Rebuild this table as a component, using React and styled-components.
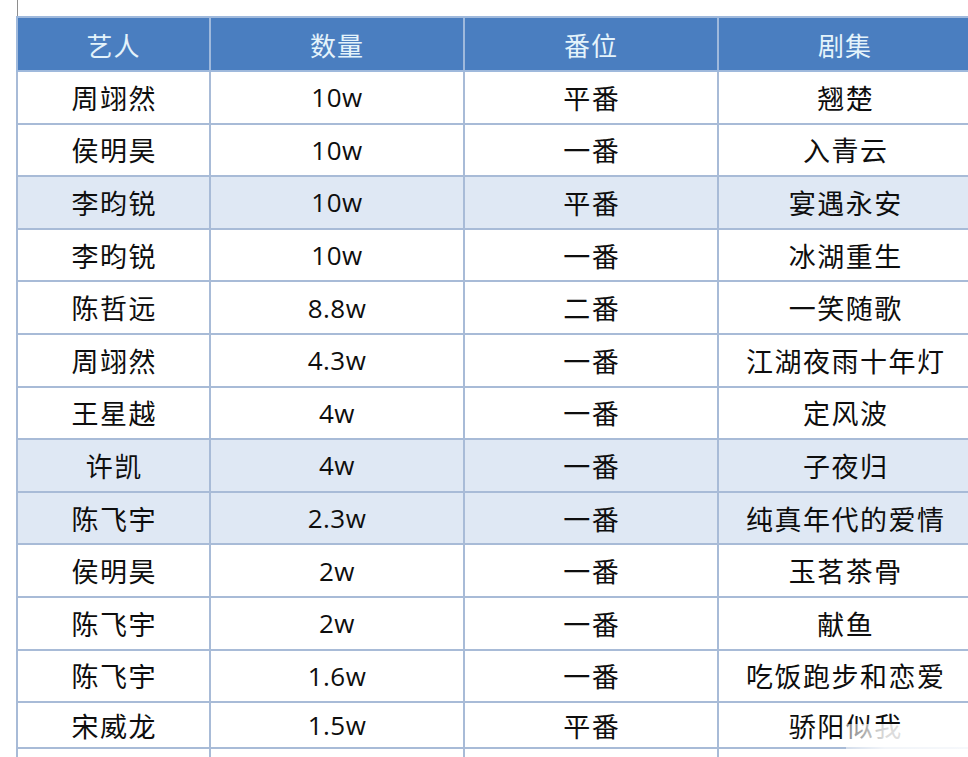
import styled, { createGlobalStyle } from 'styled-components';

const GlobalStyle = createGlobalStyle`
  html, body {
    margin: 0;
    padding: 0;
    background: #fff;
    overflow: hidden;
  }
  body {
    font-family: "Noto Sans CJK SC", "Noto Sans", sans-serif;
  }
`;

const rows = [
    ['周翊然', '10w', '平番', '翘楚'],
    ['侯明昊', '10w', '一番', '入青云'],
    ['李昀锐', '10w', '平番', '宴遇永安', true],
    ['李昀锐', '10w', '一番', '冰湖重生'],
    ['陈哲远', '8.8w', '二番', '一笑随歌'],
    ['周翊然', '4.3w', '一番', '江湖夜雨十年灯'],
    ['王星越', '4w', '一番', '定风波'],
    ['许凯', '4w', '一番', '子夜归', true],
    ['陈飞宇', '2.3w', '一番', '纯真年代的爱情', true],
    ['侯明昊', '2w', '一番', '玉茗茶骨'],
    ['陈飞宇', '2w', '一番', '献鱼'],
    ['陈飞宇', '1.6w', '一番', '吃饭跑步和恋爱'],
]

function App() {
    return (<Page>
        <GlobalStyle />
        <TopEdge />
        <TableWrap>
            <Sheet>
                <colgroup>
                    <col style={{ width: 193 }} />
                    <col style={{ width: 254 }} />
                    <col style={{ width: 254 }} />
                    <col style={{ width: 254 }} />
                </colgroup>
                <thead>
                    <HeadRow>
                        <Th>艺人</Th>
                        <Th>数量</Th>
                        <Th>番位</Th>
                        <Th>剧集</Th>
                    </HeadRow>
                </thead>
                <tbody>
                    {rows.map((r, i) => (
                        <Row key={i} $shaded={r[4]}>
                            <Td>{r[0]}</Td>
                            <Td $num>{r[1]}</Td>
                            <Td>{r[2]}</Td>
                            <Td>{r[3]}</Td>
                        </Row>
                    ))}
                    <Row $short>
                        <Td>宋威龙</Td>
                        <Td $num>1.5w</Td>
                        <Td>平番</Td>
                        <Td>骄阳似我</Td>
                    </Row>
                    <Row>
                        <Td></Td>
                        <Td></Td>
                        <Td></Td>
                        <Td></Td>
                    </Row>
                </tbody>
            </Sheet>
            <Watermark />
        </TableWrap>
    </Page>)
}

const Page = styled.div`
    width: 968px;
    height: 757px;
    overflow: hidden;
    padding-left: 16px;
    box-sizing: border-box;
`

const TopEdge = styled.div`
    height: 16px;
    border-left: 1px solid #8e8e8e;
    margin-left: 1px;
`

const TableWrap = styled.div`
    position: relative;
    width: 960px;
`

const Sheet = styled.table`
    border-collapse: collapse;
    table-layout: fixed;
    width: 957px;
    border: 2px solid #a9bcd8;
`

const HeadRow = styled.tr`
    height: 54px;
    background: #4a7ec0;
`

const Th = styled.th`
    border: 2px solid #9fb9dc;
    color: #e4f3fb;
    font-family: "Noto Sans CJK SC", sans-serif;
    font-weight: 400;
    font-size: 26px;
    letter-spacing: 1px;
    text-align: center;
    padding: 0;
`

const Row = styled.tr`
    height: ${p => p.$short ? '46px' : '52.6px'};
    background: ${p => p.$shaded ? '#dfe8f4' : '#ffffff'};
`

const Td = styled.td`
    border: 2px solid #a8bbd7;
    color: #0e0e0e;
    font-family: ${p => p.$num ? '"Open Sans", "Noto Sans CJK SC", sans-serif' : '"Noto Sans CJK SC", sans-serif'};
    font-size: ${p => p.$num ? '26px' : '27px'};
    letter-spacing: ${p => p.$num ? '0.5px' : '1.5px'};
    text-indent: ${p => p.$num ? '0' : '1.5px'};
    text-align: center;
    padding: 0;
    line-height: 1;
`

const Watermark = styled.div`
    position: absolute;
    right: 0;
    top: 708px;
    width: 130px;
    height: 34px;
    background: linear-gradient(90deg, rgba(255,255,255,0.5), rgba(255,255,255,0.85) 30%, rgba(255,255,255,0.9));
    pointer-events: none;
`

export default App
